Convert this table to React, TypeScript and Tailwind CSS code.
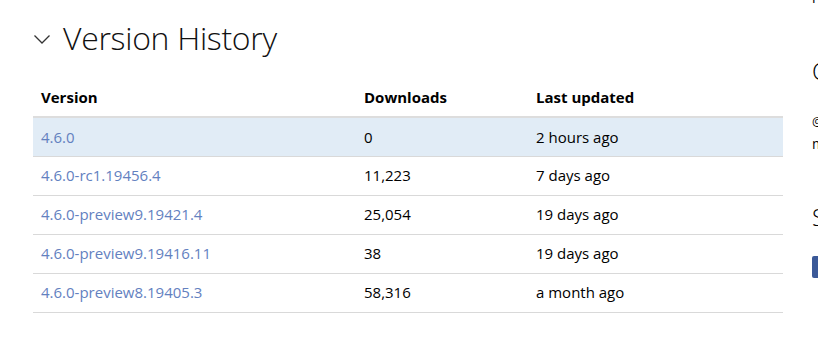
const versions = [
  { v: "4.6.0", d: "0", t: "2 hours ago", current: true },
  { v: "4.6.0-rc1.19456.4", d: "11,223", t: "7 days ago" },
  { v: "4.6.0-preview9.19421.4", d: "25,054", t: "19 days ago" },
  { v: "4.6.0-preview9.19416.11", d: "38", t: "19 days ago" },
  { v: "4.6.0-preview8.19405.3", d: "58,316", t: "a month ago" },
];

export default function App() {
  return (
    <div className="relative h-[339px] w-[818px] overflow-hidden bg-white font-['Segoe_UI','Open_Sans',sans-serif] text-black">
      <div className="pl-[33px] pt-[18px] w-[783px]">
        <h2 className="flex items-center h-[40px] text-[32px] font-light leading-none text-[#111]">
          <svg width="18" height="12" viewBox="0 0 18 12" className="mr-[12px] mt-[2px]">
            <path d="M1.5 2.5 L9 10 L16.5 2.5" fill="none" stroke="#333" strokeWidth="1.3" />
          </svg>
          <span className="tracking-[-0.3px]">Version History</span>
        </h2>

        <table className="mt-[20px] w-[750px] border-collapse text-[15px]">
          <thead>
            <tr className="border-b-2 border-[#ddd]">
              <th className="w-[323px] px-[8px] h-[39px] text-left font-bold">Version</th>
              <th className="w-[172px] px-[8px] text-left font-bold">Downloads</th>
              <th className="px-[8px] text-left font-bold">Last updated</th>
            </tr>
          </thead>
          <tbody>
            {versions.map((r) => (
              <tr key={r.v} className={`border-b border-[#d9d9d9] ${r.current ? "bg-[#e1ecf6]" : ""}`}>
                <td className="px-[8px] h-[39px]">
                  <a className="text-[#6381bf]">{r.v}</a>
                </td>
                <td className="px-[8px]">{r.d}</td>
                <td className="px-[8px]">{r.t}</td>
              </tr>
            ))}
          </tbody>
        </table>
      </div>

      {/* clipped sidebar */}
      <div className="absolute left-[812px] top-0 w-[200px] text-[14px]">
        <div className="-mt-[12px] leading-[20px]">repository</div>
        <div className="mt-[48px] text-[24px] font-light leading-[30px]">Owners</div>
        <div className="mt-[28px] text-[12px] leading-[16px]">@</div>
        <div className="mt-[4px] leading-[20px]">microsoft</div>
        <div className="mt-[48px] text-[24px] font-light leading-[30px]">Share</div>
        <div className="mt-[24px] h-[22px] w-[60px] rounded-[2px] bg-[#3b5998]" />
      </div>
    </div>
  );
}
